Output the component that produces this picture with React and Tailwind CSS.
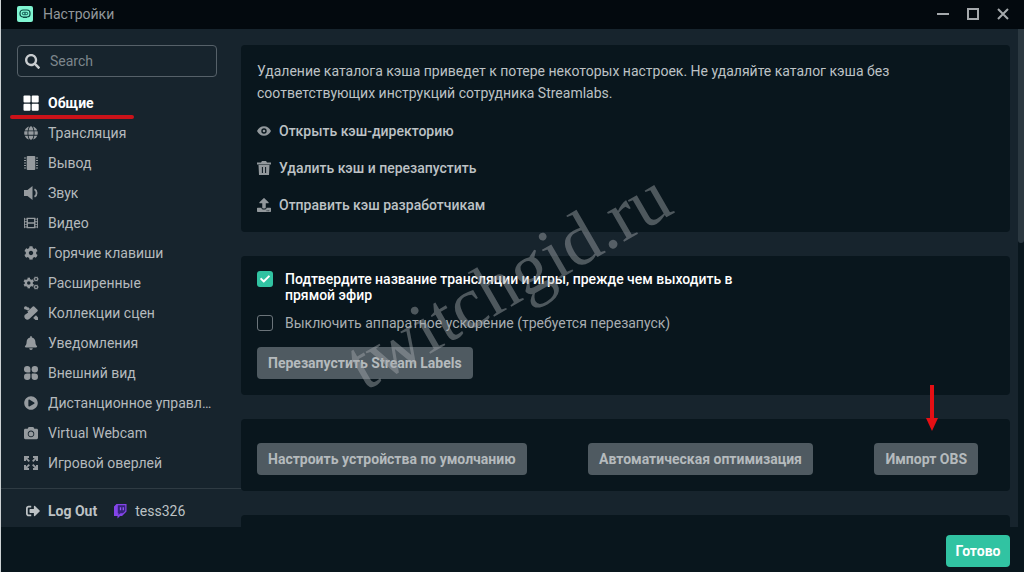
import React from "react";
import {
  FaSearch, FaGlobe, FaFilm, FaCog, FaBell,
  FaPlayCircle, FaCamera, FaSignOutAlt, FaUpload, FaCheck,
} from "react-icons/fa";

const GridIcon = () => (
  <svg viewBox="0 0 16 16" className="h-4 w-4" fill="currentColor" aria-hidden="true">
    <rect x="0.500" y="0.500" width="7" height="7" rx="1" />
    <rect x="8.700" y="0.500" width="7" height="7" rx="1" />
    <rect x="0.500" y="8.700" width="7" height="7" rx="1" />
    <rect x="8.700" y="8.700" width="7" height="7" rx="1" />
  </svg>
);

const ChipIcon = () => (
  <svg viewBox="0 0 16 16" className="h-4 w-4" fill="currentColor" aria-hidden="true">
    <rect x="3.700" y="1" width="8.600" height="14" rx="1" />
    {[2, 4.5, 7, 9.5, 12].map((y) => (
      <g key={y}>
        <rect x="1" y={y + 0.5} width="2" height="1" />
        <rect x="13" y={y + 0.5} width="2" height="1" />
      </g>
    ))}
  </svg>
);

const SpeakerIcon = () => (
  <svg viewBox="0 0 16 16" className="h-4 w-4" aria-hidden="true">
    <path d="M1 5h3.500L9.500 1v14l-5-4H1z" fill="currentColor" />
    <path d="M11.500 4.200c2.800 1.600 2.800 6 0 7.600" fill="none" stroke="currentColor" strokeWidth="1.800" />
  </svg>
);

const GearsIcon = () => (
  <svg viewBox="0 0 18 16" className="h-4 w-[18px]" fill="none" stroke="currentColor" aria-hidden="true">
    <circle cx="6.500" cy="8" r="3.300" strokeWidth="2.600" />
    {[0, 60, 120, 180, 240, 300].map((a) => (
      <path key={a} d="M6.500 4.400V2" strokeWidth="2.800" transform={`rotate(${a} 6.500 8)`} />
    ))}
    {[3.5, 12.5].map((y) => (
      <g key={y}>
        <circle cx="14.700" cy={y} r="1.700" strokeWidth="1.300" />
        {[30, 90, 150, 210, 270, 330].map((a) => (
          <path key={a} d={`M14.700 ${y - 1.8}v-1.100`} strokeWidth="1.200" transform={`rotate(${a} 14.700 ${y})`} />
        ))}
      </g>
    ))}
  </svg>
);

const ScenesIcon = () => (
  <svg viewBox="0 0 16 16" className="h-4 w-4" fill="currentColor" aria-hidden="true">
    <path d="M9.800 1.500a1 1 0 0 1 1.400 0l3.300 3.300a1 1 0 0 1 0 1.400L6 14.300a3.300 3.300 0 0 1-4.400-4.400L5.200 7.500l-.8-.9z" />
    <circle cx="2.700" cy="2.900" r="1.700" />
    <path d="M4.800 1.700 7 3.900 5 5.600 3 4.800z" />
    <path d="M11.300 11.800 13 10.200l2 2.300V15h-2.500L10.200 13z" />
  </svg>
);

const ThemeIcon = () => (
  <svg viewBox="0 0 16 16" className="h-4 w-4" fill="currentColor" aria-hidden="true">
    <path d="M1 4.200a3.200 3.200 0 1 1 6.400 0v2.400a.8.8 0 0 1-.8.8H4.200A3.200 3.200 0 0 1 1 4.200z" />
    <circle cx="11.800" cy="4.200" r="3.200" />
    <path d="M1 11.800a3.200 3.200 0 1 0 6.400 0V9.400a.8.8 0 0 0-.8-.8H4.200A3.200 3.200 0 0 0 1 11.800z" />
    <path d="M15 11.800a3.200 3.200 0 1 1-6.400 0V9.400c0-.4.4-.8.8-.8h2.400a3.200 3.200 0 0 1 3.200 3.200z" />
  </svg>
);

const ExpandIcon = () => (
  <svg viewBox="0 0 16 16" className="h-4 w-4" aria-hidden="true">
    {[0, 90, 180, 270].map((a) => (
      <g key={a} transform={`rotate(${a} 8 8)`}>
        <path d="M1 1h5v2H3v3H1z" fill="currentColor" />
        <path d="M2.500 2.500 6.300 6.300" stroke="currentColor" strokeWidth="1.800" />
      </g>
    ))}
  </svg>
);

const EyeIcon = () => (
  <svg viewBox="0 0 14 14" className="h-3.5 w-3.5" aria-hidden="true">
    <path fill="currentColor" fillRule="evenodd" d="M0 7c1.500-3 4-4.800 7-4.800S12.500 4 14 7c-1.500 3-4 4.800-7 4.800S1.500 10 0 7zm7-2.700a2.700 2.700 0 1 0 0 5.400 2.700 2.700 0 0 0 0-5.400z" />
    <circle cx="7" cy="7" r="1.300" fill="currentColor" />
  </svg>
);

const TrashIcon = () => (
  <svg viewBox="0 0 14 14" className="h-3.5 w-3.5" aria-hidden="true">
    <path fill="currentColor" fillRule="evenodd" d="M0 1.500h4L5 0h4l1 1.500h4v2H0zM1.500 4h11L12 14H2zM4.900 6v6h1V6zm3.200 0v6h1V6z" />
  </svg>
);

const TwitchIcon = () => (
  <svg viewBox="0 0 16 16" className="h-4 w-4" aria-hidden="true">
    <path d="M4.500 1h10v7.500L10 13H8l-2.500 2.500V13H2V3.500z" fill="#8444e8" />
    <path d="M5.800 2.200h7.500v5.800L11 10.300H8.500l-2 1.800v-1.800h-.7z" fill="#35237a" />
    <path d="M8.500 4.300v3M11.300 4.300v3" stroke="#9355f5" strokeWidth="1.300" />
  </svg>
);

const LogoIcon = () => (
  <svg viewBox="0 0 16 16" className="h-4 w-4" aria-hidden="true">
    <rect width="16" height="16" rx="2" fill="#80f5d2" />
    <rect x="3" y="4" width="10" height="7" rx="3" fill="none" stroke="#0c4a42" strokeWidth="1.200" />
    <rect x="4.800" y="5.700" width="6.400" height="3.600" rx="1.800" fill="#237266" />
    <circle cx="6.600" cy="7.500" r=".8" fill="#80f5d2" />
    <circle cx="9.400" cy="7.500" r=".8" fill="#80f5d2" />
    <path d="M6 11.500h4" stroke="#0c4a42" />
  </svg>
);

const NAV = [
  ["Общие", <GridIcon />],
  ["Трансляция", <FaGlobe className="h-3.5 w-3.5" />],
  ["Вывод", <ChipIcon />],
  ["Звук", <SpeakerIcon />],
  ["Видео", <FaFilm className="h-3.5 w-3.5" />],
  ["Горячие клавиши", <FaCog className="h-3.5 w-3.5" />],
  ["Расширенные", <GearsIcon />],
  ["Коллекции сцен", <ScenesIcon />],
  ["Уведомления", <FaBell className="h-3.5 w-3.5" />],
  ["Внешний вид", <ThemeIcon />],
  ["Дистанционное управление", <FaPlayCircle className="h-3.5 w-3.5" />],
  ["Virtual Webcam", <FaCamera className="h-3.5 w-3.5" />],
  ["Игровой оверлей", <ExpandIcon />],
];

const CACHE_ACTIONS = [
  ["Открыть кэш-директорию", <EyeIcon />],
  ["Удалить кэш и перезапустить", <TrashIcon />],
  ["Отправить кэш разработчикам", <FaUpload className="h-3.5 w-3.5" />],
];

const GrayButton = ({ children }) => (
  <button type="button" className="h-8 rounded bg-[#4f5a61] px-[11px] font-bold whitespace-nowrap text-[#b5babd]">
    {children}
  </button>
);

const Card = ({ className = "", children }) => (
  <section className={`shrink-0 rounded bg-[#09161d] px-4 ${className}`}>{children}</section>
);

function TitleBar() {
  return (
    <header className="flex h-[29px] shrink-0 items-center bg-[#03090e] pr-3.5 pb-0.5 pl-4">
      <LogoIcon />
      <h1 className="ml-2.5 text-[#92979b]">Настройки</h1>
      <div className="ml-auto flex items-center gap-4 text-[#a5a9ac]">
        <button type="button" aria-label="Свернуть">
          <svg viewBox="0 0 14 14" className="h-3.5 w-3.5"><path d="M1 7h12" stroke="currentColor" strokeWidth="2" /></svg>
        </button>
        <button type="button" aria-label="Развернуть">
          <svg viewBox="0 0 14 14" className="h-3.5 w-3.5"><rect x="2" y="2" width="10" height="10" fill="none" stroke="currentColor" strokeWidth="2" /></svg>
        </button>
        <button type="button" aria-label="Закрыть">
          <svg viewBox="0 0 14 14" className="h-3.5 w-3.5"><path d="m2 2 10 10M12 2 2 12" stroke="currentColor" strokeWidth="2" /></svg>
        </button>
      </div>
    </header>
  );
}

function Sidebar() {
  return (
    <aside className="flex w-60 shrink-0 flex-col">
      <label className="mt-4 mr-6 ml-4 flex h-8 shrink-0 items-center gap-2.5 rounded border border-[#566169] pl-[7px]">
        <FaSearch className="h-[15px] w-[15px] shrink-0 text-[#c8cccf]" aria-hidden="true" />
        <input type="search" aria-label="Search" placeholder="Search" className="min-w-0 flex-1 bg-transparent outline-none placeholder:text-[#7d868c]" />
      </label>
      <nav className="relative mt-[11px]">
        {NAV.map(([label, icon], i) => (
          <a key={label} href="#" aria-current={i === 0 ? "page" : undefined}
            className={`flex h-[30px] items-center gap-[9px] pr-6 pl-[22px] ${i === 0 ? "font-bold text-white" : "text-[#b5babd]"}`}>
            <span className={`flex w-4 shrink-0 ${i === 6 ? "justify-start" : "justify-center"} ${i === 0 ? "" : "text-[#969b9f]"}`}>{icon}</span>
            <span className="truncate">{label}</span>
          </a>
        ))}
        <svg viewBox="0 0 126 6" className="absolute top-[26px] left-2 h-1.5 w-[126px]" aria-hidden="true">
          <path d="M3 3h120" stroke="#cb1219" strokeWidth="4" strokeLinecap="round" />
        </svg>
      </nav>
      <footer className="mt-auto flex h-[39px] shrink-0 items-center border-t border-[#2f3b43] pt-1.5 pl-[25px] text-[#bdc2c5]">
        <button type="button" className="flex items-center gap-2 font-bold">
          <FaSignOutAlt className="h-3.5 w-3.5" aria-hidden="true" />
          Log Out
        </button>
        <span className="ml-[15px] flex items-center gap-[7px]">
          <TwitchIcon />
          tess326
        </span>
      </footer>
    </aside>
  );
}

export default function App() {
  return (
    <div className="flex h-screen flex-col overflow-hidden border-l border-[#cdd2d4] bg-[#09161d] font-['Roboto','Liberation_Sans',sans-serif] text-sm leading-4">
      <TitleBar />
      <div className="flex min-h-0 flex-1 bg-[#17242d]">
        <Sidebar />
        <main className="relative flex min-w-0 flex-1 flex-col gap-6 overflow-hidden pt-4 pr-2">
          <Card className="pt-[15px] pb-[19px]">
            <p className="max-w-[660px] leading-[22px] text-[#bdc2c5]">
              Удаление каталога кэша приведет к потере некоторых настроек. Не удаляйте каталог кэша без соответствующих инструкций сотрудника Streamlabs.
            </p>
            <ul className="mt-[19px] flex flex-col gap-[21px]">
              {CACHE_ACTIONS.map(([label, icon]) => (
                <li key={label}>
                  <a href="#" className="flex items-center gap-2 font-medium text-[#bdc2c5]">
                    <span className="flex w-3.5 justify-center text-[#92989c]">{icon}</span>
                    {label}
                  </a>
                </li>
              ))}
            </ul>
          </Card>

          <Card className="pt-[15px] pb-4">
            <label className="flex items-start gap-3 font-medium text-white">
              <span className="grid h-4 w-4 shrink-0">
                <input type="checkbox" defaultChecked className="col-start-1 row-start-1 h-4 w-4 appearance-none rounded-[3px] bg-[#31c3a2]" />
                <FaCheck className="pointer-events-none col-start-1 row-start-1 h-2.5 w-2.5 place-self-center text-white" aria-hidden="true" />
              </span>
              <span className="max-w-[460px]">Подтвердите название трансляции и игры, прежде чем выходить в прямой эфир</span>
            </label>
            <label className="mt-3 mb-4 flex items-center gap-3 text-[#a8adb1]">
              <input type="checkbox" className="h-4 w-4 shrink-0 appearance-none rounded-[3px] border border-[#6b747a]" />
              Выключить аппаратное ускорение (требуется перезапуск)
            </label>
            <GrayButton>Перезапустить Stream Labels</GrayButton>
          </Card>

          <Card className="flex items-center justify-between pt-6 pr-8 pb-4">
            <GrayButton>Настроить устройства по умолчанию</GrayButton>
            <GrayButton>Автоматическая оптимизация</GrayButton>
            <GrayButton>Импорт OBS</GrayButton>
          </Card>

          <Card className="h-24" />

          <svg viewBox="0 0 12 46" className="absolute top-[356px] right-20 h-[46px] w-3" aria-hidden="true">
            <path d="M6 0v36" stroke="#e50f14" strokeWidth="4" />
            <path d="M0 33h12L6 46z" fill="#e50f14" />
          </svg>
          <div aria-hidden="true" className="pointer-events-none absolute top-[213px] left-[87px] -rotate-30 font-['Liberation_Serif',serif] text-[74px] leading-[76px] whitespace-nowrap text-[#a3a8ad]/45">
            twitchgid.ru
          </div>
        </main>
        <div className="w-1.5 shrink-0 bg-[#09161d]" aria-hidden="true">
          <div className="h-[43%] rounded-b bg-[#2b3840]" />
        </div>
      </div>
      <footer className="flex h-[45px] shrink-0 items-center justify-end pt-0.5 pr-3.5">
        <button type="button" className="h-8 min-w-16 rounded bg-[#31c3a2] px-2 font-bold text-white">Готово</button>
      </footer>
    </div>
  );
}
